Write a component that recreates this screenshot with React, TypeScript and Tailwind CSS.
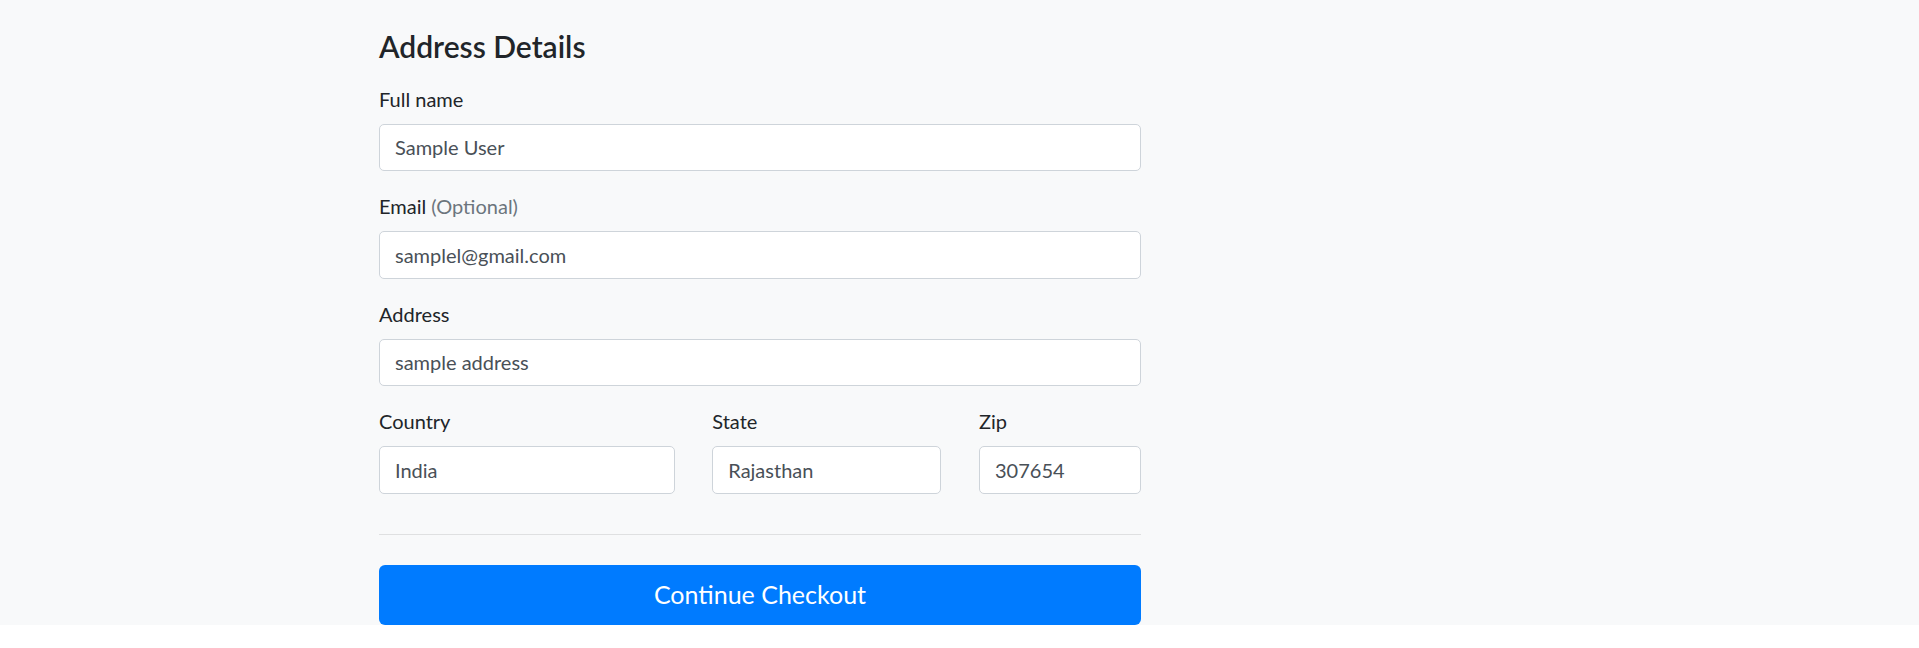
import React from 'react';

const inputCls =
  'block w-full h-[47.5px] px-[15px] bg-white border border-[#ced4da] rounded-[5px] text-[20px] leading-[30px] text-[#495057] outline-none';
const labelCls = 'block text-[20px] leading-[30px] mb-[10px] text-[#212529]';

function Field({ label, extra, value }: { label: string; extra?: string; value: string }) {
  return (
    <div className="mb-[20px]">
      <label className={labelCls}>
        {label}
        {extra && <span className="text-[#6c757d]"> {extra}</span>}
      </label>
      <input className={inputCls} defaultValue={value} />
    </div>
  );
}

export default function App() {
  return (
    <div className="min-h-screen bg-white" style={{ fontFamily: '"Segoe UI", Lato, "Open Sans", sans-serif' }}>
      <div className="bg-[#f8f9fa] pt-[27.5px]">
        <div className="ml-[379px] w-[762px]">
          <h4 className="text-[30px] leading-[36px] font-semibold text-[#212529] mb-[20px]">Address Details</h4>

          <form onSubmit={(e) => e.preventDefault()}>
            <Field label="Full name" value="Sample User" />
            <Field label="Email" extra="(Optional)" value="samplel@gmail.com" />
            <Field label="Address" value="sample address" />

            {/* Country / State / Zip row */}
            <div className="flex justify-between">
              <div className="w-[295.5px] mb-[20px]">
                <label className={labelCls}>Country</label>
                <input className={inputCls} defaultValue="India" />
              </div>
              <div className="w-[229px] mb-[20px]">
                <label className={labelCls}>State</label>
                <input className={inputCls} defaultValue="Rajasthan" />
              </div>
              <div className="w-[162px] mb-[20px]">
                <label className={labelCls}>Zip</label>
                <input className={inputCls} defaultValue="307654" />
              </div>
            </div>

            <hr className="mt-[20px] mb-[30px] border-0 border-t border-[#dfe0e1]" />

            <button
              type="submit"
              className="block w-full h-[60px] bg-[#007bff] text-white text-[25px] leading-[37.5px] rounded-[6px]"
            >
              Continue Checkout
            </button>
          </form>
        </div>
      </div>
    </div>
  );
}
